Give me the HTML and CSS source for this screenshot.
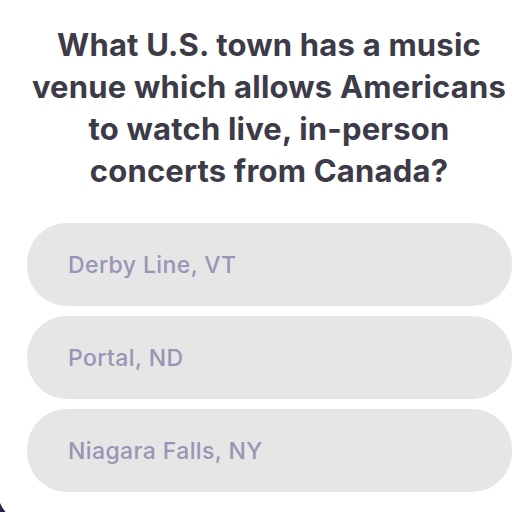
FILE: index.html
```html
<!DOCTYPE html>
<html lang="en">
<head>
<meta charset="utf-8">
<title>Quiz</title>
<link rel="stylesheet" href="styles.css">
</head>
<body>
<main class="card">
  <h1 class="question">What U.S. town has a music<br>venue which allows Americans<br>to watch live, in-person<br>concerts from Canada?</h1>
  <div class="options">
    <button class="option">Derby Line, VT</button>
    <button class="option">Portal, ND</button>
    <button class="option">Niagara Falls, NY</button>
  </div>
</main>
</body>
</html>
```

FILE: styles.css
```css
html, body {
  margin: 0;
  padding: 0;
}
body {
  background: #2a2449;
  width: 524px;
  height: 512px;
  overflow: hidden;
}
.card {
  background: #ffffff;
  height: 522px;
  margin-left: -2px;
  border-bottom-left-radius: 30px;
  box-sizing: border-box;
  padding-top: 24px;
}
.question {
  margin: 0 0 31px 0;
  padding-left: 16px;
  font-family: Inter, "Open Sans", sans-serif;
  font-weight: 700;
  font-size: 31px;
  line-height: 42px;
  letter-spacing: 0.2px;
  color: #3c3b47;
  text-align: center;
  white-space: nowrap;
}
.options {
  display: flex;
  flex-direction: column;
  gap: 10px;
  padding: 0 12px 0 29px;
}
.option {
  display: flex;
  align-items: center;
  height: 83px;
  border: none;
  border-radius: 40px;
  background: #e6e6e6;
  padding: 0 0 0 41px;
  font-family: Inter, "Open Sans", sans-serif;
  font-weight: 500;
  font-size: 23px;
  letter-spacing: 0.4px;
  color: #9995b5;
  text-align: left;
  width: 100%;
}
```
